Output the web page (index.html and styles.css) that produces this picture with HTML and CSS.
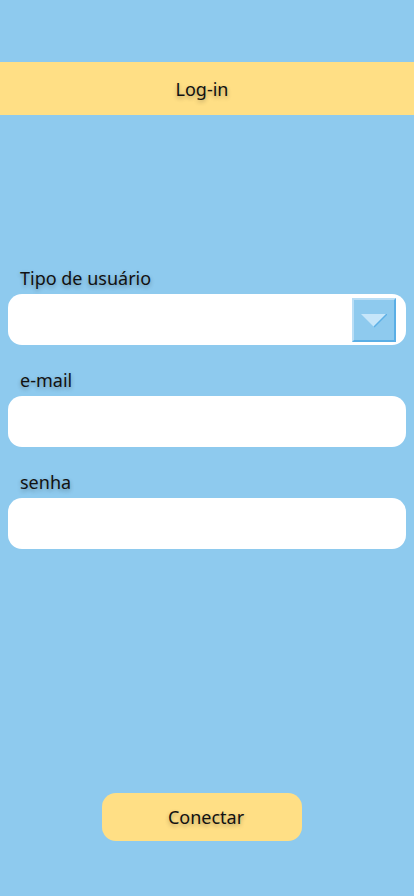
FILE: index.html
```html
<!DOCTYPE html>
<html lang="pt">
<head>
<meta charset="utf-8">
<title>Log-in</title>
<link rel="stylesheet" href="styles.css">
</head>
<body>
<div class="screen">
  <header class="topbar"><span class="title">Log-in</span></header>
  <form class="form">
    <div class="field">
      <label class="label">Tipo de usuário</label>
      <div class="input select">
        <span class="drop">
          <svg width="26" height="14" viewBox="0 0 26 14"><polygon points="0,0 26,0 13,13" fill="#c6e6fa"/><polyline points="26,0 13,13" fill="none" stroke="#5db0e6" stroke-width="1.5"/></svg>
        </span>
      </div>
    </div>
    <div class="field">
      <label class="label">e-mail</label>
      <div class="input"></div>
    </div>
    <div class="field">
      <label class="label">senha</label>
      <div class="input"></div>
    </div>
  </form>
  <div class="actions"><button class="btn" type="button">Conectar</button></div>
</div>
</body>
</html>
```
FILE: styles.css
```css
html, body { margin: 0; padding: 0; }
body {
  background: #8ecaee;
  font-family: "Noto Sans", Lato, sans-serif;
  color: #111;
}
.screen {
  width: 414px;
  height: 896px;
  display: flex;
  flex-direction: column;
}
.topbar {
  margin-top: 62px;
  height: 53px;
  background: #ffdf85;
  display: flex;
  align-items: center;
  justify-content: center;
  padding-right: 10px;
}
.title {
  font-size: 18px;
  text-shadow: 0 2px 4px rgba(0,0,0,0.3);
}
.form {
  margin: 151px 8px 0;
  display: flex;
  flex-direction: column;
  gap: 23px;
}
.field {
  display: flex;
  flex-direction: column;
  gap: 5px;
}
.label {
  padding-left: 12px;
  padding-top: 1px;
  font-size: 18px;
  line-height: 22px;
  text-shadow: 0 2px 4px rgba(0,0,0,0.3);
}
.input {
  height: 51px;
  background: #fff;
  border-radius: 14px;
}
.select {
  display: flex;
  justify-content: flex-end;
  align-items: center;
  padding-right: 10px;
}
.drop {
  width: 40px;
  height: 40px;
  background: #8ecaee;
  border: 2px solid;
  border-color: #b9def6 #5aaee5 #5aaee5 #b9def6;
  display: flex;
  align-items: center;
  justify-content: center;
}
.drop svg { margin-top: 2px; }
.actions {
  margin-top: auto;
  margin-bottom: 55px;
  padding-left: 102px;
  display: flex;
}
.btn {
  width: 200px;
  height: 48px;
  border: none;
  border-radius: 14px;
  background: #ffdf85;
  font-family: inherit;
  font-size: 18px;
  color: #111;
  padding: 0 0 0 8px;
  text-shadow: 0 2px 4px rgba(0,0,0,0.3);
}
```
